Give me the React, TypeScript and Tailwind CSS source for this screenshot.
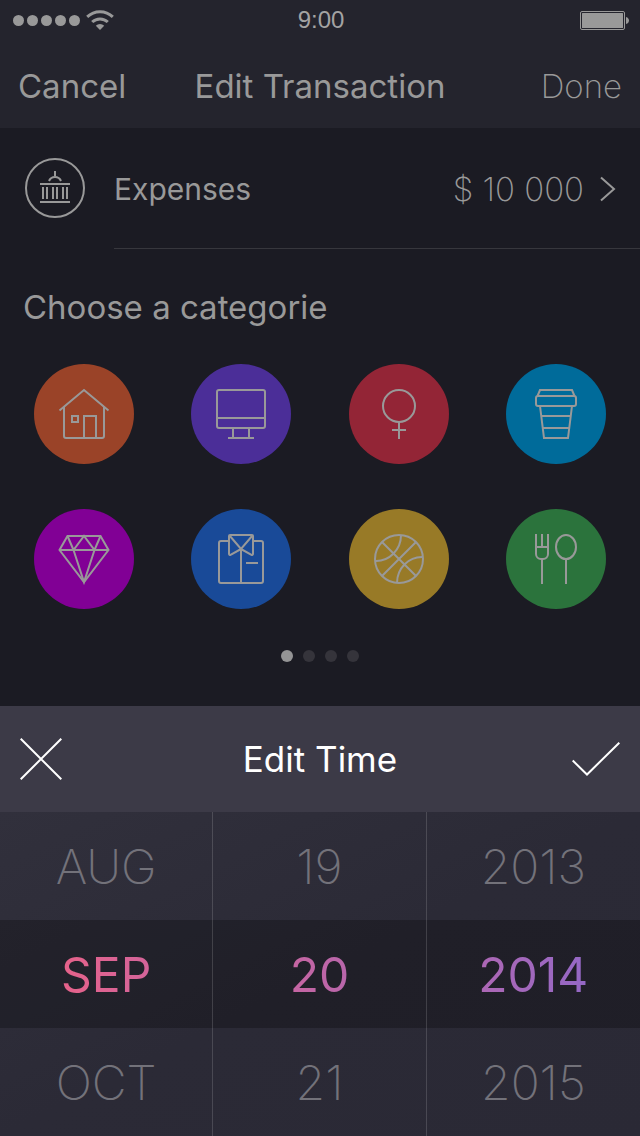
import type { ReactNode } from "react";

type Category = { name: string; color: string; icon: ReactNode };

const categories: Category[] = [
  {
    name: "Home",
    color: "bg-[#9a4328]",
    icon: (
      <>
        <path d="M25.5 46.5 50 26l24.5 20.5" />
        <path d="M30 43v29a2 2 0 0 0 2 2h36a2 2 0 0 0 2-2V43" />
        <path d="M38 52h6v6h-6zM50 74V52h12v22" />
      </>
    ),
  },
  {
    name: "Electronics",
    color: "bg-[#4b2e98]",
    icon: (
      <>
        <rect x="26" y="26" width="48" height="38" rx="2" />
        <path d="M26 54h48M42 64v10M58 64v10M37 74h26" />
      </>
    ),
  },
  {
    name: "Women",
    color: "bg-[#932536]",
    icon: (
      <>
        <circle cx="50" cy="42" r="16" />
        <path d="M50 58v17M43 66h14" />
      </>
    ),
  },
  {
    name: "Coffee",
    color: "bg-[#006b9a]",
    icon: (
      <>
        <path d="M31.5 32 34 26h32l2.5 6" />
        <rect x="30" y="32" width="40" height="10" rx="2" />
        <path d="M34 42l4 32h24l4-32M35.5 52h29M37 64h26" />
      </>
    ),
  },
  {
    name: "Jewelry",
    color: "bg-[#810095]",
    icon: (
      <>
        <path d="M33.5 27h33l8 14L50 73 25.5 41z" />
        <path d="M25.5 41h49M33.5 27l6 14L50 27l10.5 14 6-14M39.5 41 50 73l10.5-32" />
      </>
    ),
  },
  {
    name: "Clothes",
    color: "bg-[#194a98]",
    icon: (
      <>
        <path d="M38 32h-8a2 2 0 0 0-2 2v38a2 2 0 0 0 2 2h40a2 2 0 0 0 2-2V34a2 2 0 0 0-2-2h-8" />
        <path d="M39 26h22a1 1 0 0 1 1 1v18a1 1 0 0 1-1.5.8L50 40l-10.5 5.8A1 1 0 0 1 38 45V27a1 1 0 0 1 1-1z" />
        <path d="M38.5 26.5 50 40l11.5-13.5M50 40v34M55 54h12" />
      </>
    ),
  },
  {
    name: "Sport",
    color: "bg-[#987a27]",
    icon: (
      <>
        <circle cx="50" cy="50" r="24" />
        <path d="M33 33l34 34M67 33 33 67M52 26A25 26 0 0 1 26 52M74 48A25 26 0 0 0 48 74" />
      </>
    ),
  },
  {
    name: "Food",
    color: "bg-[#2b733c]",
    icon: (
      <>
        <path d="M30 25v20a5 5 0 0 0 5 5h2a5 5 0 0 0 5-5V25M36 25v13M30 38h12M36 50v25" />
        <ellipse cx="60" cy="38" rx="10" ry="12" />
        <path d="M60 50v25" />
      </>
    ),
  },
];

const rows = [
  ["AUG", "19", "2013"],
  ["SEP", "20", "2014"],
  ["OCT", "21", "2015"],
];

const selectedGradients = [
  "from-[#e6628a] to-[#d3649a]",
  "from-[#c665a2] to-[#b866ab]",
  "from-[#ad67b4] to-[#9468c6]",
];

function StatusBar() {
  return (
    <div className="grid h-10 grid-cols-3 items-center pr-[11px] pl-[13px]">
      <div className="flex items-center gap-[6px]">
        <div className="flex gap-[3px]">
          {[0, 1, 2, 3, 4].map((n) => (
            <span key={n} className="size-[11px] rounded-full bg-[#999]" />
          ))}
        </div>
        <svg viewBox="0 0 28 20" className="h-5 w-7" fill="none" stroke="#999" strokeWidth="3">
          <path d="M1.2 6.8a18.5 18.5 0 0 1 25.6 0M6.2 12a11.3 11.3 0 0 1 15.6 0" />
          <path d="M9.8 15.8a6 6 0 0 1 8.4 0L14 20z" fill="#999" stroke="none" />
        </svg>
      </div>
      <time className="text-center font-['Liberation_Sans',sans-serif] text-2xl leading-none text-[#a3a3a3]">9:00</time>
      <svg viewBox="0 0 49 19" className="h-[19px] w-[49px] justify-self-end" fill="#999">
        <rect x="0.5" y="0.5" width="44" height="18" rx="1.5" fill="none" stroke="#999" />
        <rect x="2" y="2" width="41" height="15" rx="0.5" />
        <path d="M46 6c4 1 4 6 0 7z" />
      </svg>
    </div>
  );
}

export default function App() {
  return (
    <div className="flex min-h-screen flex-col bg-[#1b1b23] font-[Inter,sans-serif] text-[#999]">
      <header className="bg-[#24242d]">
        <StatusBar />
        <div className="grid h-[88px] grid-cols-[1fr_auto_1fr] items-center px-[18px] pt-1 text-[33px] leading-10">
          <button type="button" className="justify-self-start">Cancel</button>
          <h1>Edit Transaction</h1>
          <button type="button" className="justify-self-end font-extralight">Done</button>
        </div>
      </header>

      <main className="flex-1 pb-11">
        <button type="button" className="flex w-full items-start gap-[29px] pl-[25px] text-left">
          <svg viewBox="0 0 60 60" className="mt-[30px] size-[60px] shrink-0" fill="none" stroke="#999" strokeWidth="2">
            <circle cx="30" cy="30" r="29" />
            <path d="M15 26h30M15 44h30M18 29v12M22 29v12M28 29v12M32 29v12M38 29v12M42 29v12M30 13v5M24 23a6.5 6.5 0 0 1 12 0" />
          </svg>
          <span className="flex h-[121px] flex-1 items-center border-b border-[#37373d] pt-[2px] pr-6 leading-10">
            <span className="flex-1 text-[30px]">Expenses</span>
            <span className="text-[33px] font-extralight">$ 10 000</span>
            <svg viewBox="0 0 16 26" className="ml-4 h-[26px] w-4" fill="none" stroke="currentColor" strokeWidth="2">
              <path d="M1 1.5 14 13 1 24.5" />
            </svg>
          </span>
        </button>

        <h2 className="px-[23px] pt-[38px] text-[33px] leading-10">Choose a categorie</h2>
        <div className="mt-[37px] grid grid-cols-[repeat(4,100px)] justify-between gap-y-[45px] px-[34px]">
          {categories.map((c) => (
            <button key={c.name} type="button" aria-label={c.name} className={`size-[100px] rounded-full ${c.color}`}>
              <svg viewBox="0 0 100 100" fill="none" stroke="#999" strokeWidth="2">
                {c.icon}
              </svg>
            </button>
          ))}
        </div>
        <div className="mt-[41px] flex justify-center gap-[10px]">
          {[0, 1, 2, 3].map((n) => (
            <button
              key={n}
              type="button"
              aria-label={`Page ${n + 1}`}
              className={`size-3 rounded-full ${n === 0 ? "bg-[#949495]" : "bg-[#35343b]"}`}
            />
          ))}
        </div>
      </main>

      <section>
        <div className="grid h-[106px] grid-cols-[1fr_auto_1fr] items-center bg-[#3c3a47] px-5 text-white">
          <button type="button" aria-label="Close" className="justify-self-start">
            <svg viewBox="0 0 42 42" className="size-[42px]" fill="none" stroke="currentColor" strokeWidth="2">
              <path d="M.7.7l40.6 40.6M41.3.7.7 41.3" />
            </svg>
          </button>
          <h2 className="text-[35px] leading-10">Edit Time</h2>
          <button type="button" aria-label="Confirm" className="justify-self-end">
            <svg viewBox="0 0 48 34" className="h-[34px] w-12" fill="none" stroke="currentColor" strokeWidth="2">
              <path d="M.7 18.5 15 32.5 47.3.7" />
            </svg>
          </button>
        </div>
        <div className="bg-linear-to-br from-[#31303c] via-[#2b2a36] to-[#2a2935]">
          {rows.map((row, r) => (
            <div key={row[0]} className={`grid grid-cols-3 ${r === 1 ? "bg-black/25" : ""}`}>
              {row.map((value, c) => (
                <button
                  key={value}
                  type="button"
                  aria-pressed={r === 1}
                  className={`flex h-[108px] items-center justify-center pt-[2px] text-5xl ${c < 2 ? "border-r border-white/15" : ""}`}
                >
                  <span
                    className={
                      r === 1
                        ? `bg-linear-to-r bg-clip-text text-transparent ${selectedGradients[c]}`
                        : "font-extralight text-[#73727a]"
                    }
                  >
                    {value}
                  </span>
                </button>
              ))}
            </div>
          ))}
        </div>
      </section>
    </div>
  );
}
